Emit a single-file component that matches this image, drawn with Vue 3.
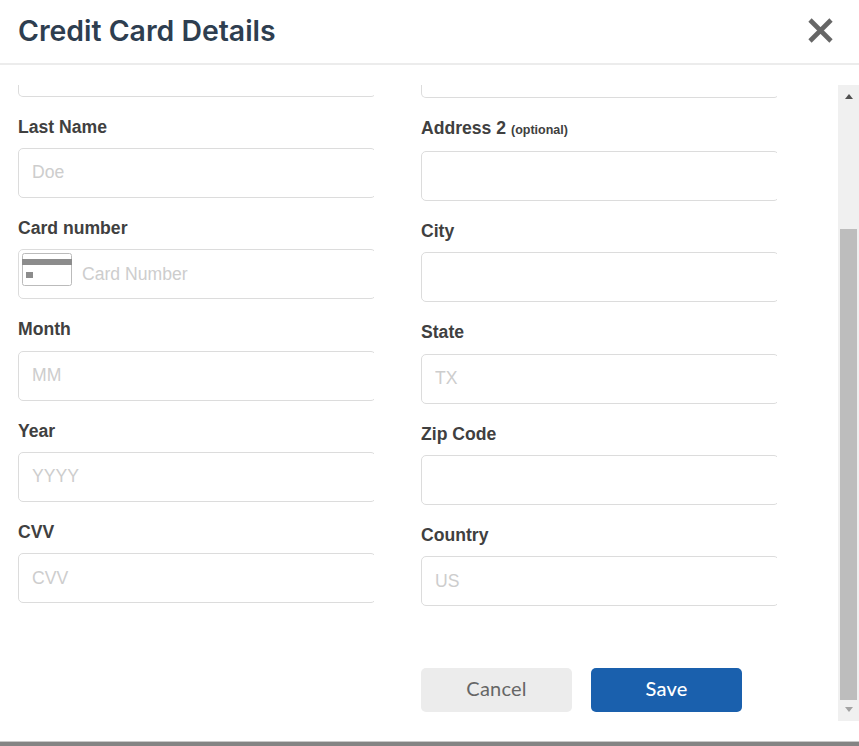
<template>
  <div class="modal">
    <header class="modal-header">
      <h1>Credit Card Details</h1>
      <button class="close" type="button" aria-label="Close">
        <svg width="27" height="27" viewBox="0 0 27 27">
          <path d="M3 3 L24 24 M24 3 L3 24" stroke="#666" stroke-width="4.6" fill="none" />
        </svg>
      </button>
    </header>

    <div class="modal-body">
      <form class="form-grid">
        <div class="column">
          <div class="cut-input"></div>
          <div v-for="f in leftFields" :key="f.label" class="field">
            <label>{{ f.label }}</label>
            <div class="input-wrap">
              <svg v-if="f.card" class="card-icon" width="50" height="33" viewBox="0 0 50 33">
                <rect x="0.5" y="0.5" width="49" height="32" rx="2" fill="#fff" stroke="#bbb" />
                <rect x="0" y="6" width="50" height="6" fill="#8c8c8c" />
                <rect x="4" y="19" width="7" height="6" fill="#8c8c8c" />
              </svg>
              <input :class="{ 'with-card': f.card }" :placeholder="f.placeholder" />
            </div>
          </div>
        </div>

        <div class="column right">
          <div class="cut-input"></div>
          <div v-for="f in rightFields" :key="f.label" class="field">
            <label :class="{ 'has-note': f.optional }">{{ f.label }} <small v-if="f.optional">(optional)</small></label>
            <div class="input-wrap">
              <input :placeholder="f.placeholder" />
            </div>
          </div>
          <div class="actions">
            <button type="button" class="btn cancel">Cancel</button>
            <button type="button" class="btn save">Save</button>
          </div>
        </div>
      </form>

      <div class="scrollbar">
        <div class="arrow up"></div>
        <div class="track">
          <div class="thumb"></div>
        </div>
        <div class="arrow down"></div>
      </div>
    </div>

    <div class="bottom-edge"></div>
  </div>
</template>

<script setup>
const leftFields = [
  { label: 'Last Name', placeholder: 'Doe' },
  { label: 'Card number', placeholder: 'Card Number', card: true },
  { label: 'Month', placeholder: 'MM' },
  { label: 'Year', placeholder: 'YYYY' },
  { label: 'CVV', placeholder: 'CVV' },
];

const rightFields = [
  { label: 'Address 2', placeholder: '', optional: true },
  { label: 'City', placeholder: '' },
  { label: 'State', placeholder: 'TX' },
  { label: 'Zip Code', placeholder: '' },
  { label: 'Country', placeholder: 'US' },
];
</script>

<style>
html, body {
  margin: 0;
  background: #fff;
}
</style>

<style scoped>
.modal {
  width: 859px;
  height: 746px;
  display: flex;
  flex-direction: column;
  overflow: hidden;
  background: #fff;
  font-family: "Liberation Sans", Arial, sans-serif;
}

.modal-header {
  height: 60px;
  flex: none;
  display: flex;
  align-items: center;
  justify-content: space-between;
  padding: 0 25px 3px 18px;
  border-bottom: 2px solid #ececec;
  box-sizing: content-box;
}

h1 {
  margin: 0;
  font-family: Inter, sans-serif;
  font-size: 28.4px;
  font-weight: 600;
  color: #2e3e50;
}

.close {
  border: 0;
  padding: 0;
  background: none;
  display: flex;
}

.modal-body {
  flex: 1;
  min-height: 0;
  display: flex;
  padding-top: 20px;
}

.form-grid {
  flex: 1;
  display: grid;
  grid-template-columns: 356px 356px;
  column-gap: 47px;
  padding-left: 18px;
  align-content: start;
}

.column {
  display: flex;
  flex-direction: column;
  overflow: hidden;
}

.cut-input {
  height: 11.67px;
  border: 1px solid #dcdcdc;
  border-top: 0;
  border-radius: 0 0 5px 5px;
  margin-right: -2px;
  box-sizing: border-box;
}

.column.right .cut-input {
  height: 13px;
  margin-bottom: 1.67px;
}

.field {
  padding-top: 19.93px;
}

label {
  display: block;
  height: 20px;
  line-height: 20px;
  margin-bottom: 11.4px;
  font-size: 17.6px;
  font-weight: 700;
  color: #404040;
}

label.has-note {
  margin-top: -2px;
  margin-bottom: 13.4px;
}

small {
  font-size: 12.5px;
}

.input-wrap {
  position: relative;
}

input {
  display: block;
  width: calc(100% + 2px);
  height: 50px;
  box-sizing: border-box;
  padding: 0 13px;
  border: 1px solid #dcdcdc;
  border-radius: 5px;
  outline: 0;
  font-family: inherit;
  font-size: 17.6px;
  background: transparent;
}

input::placeholder {
  color: #cdcdcd;
  opacity: 1;
}

input.with-card {
  padding-left: 63px;
}

.card-icon {
  position: absolute;
  left: 4px;
  top: 4px;
}

.actions {
  display: flex;
  gap: 19px;
  margin-top: 62px;
}

.btn {
  width: 151px;
  height: 44px;
  border: 0;
  border-radius: 5px;
  padding: 0 0 5px;
  font-family: Lato, sans-serif;
  font-size: 20px;
  letter-spacing: 0.2px;
}

.cancel {
  background: #ececec;
  color: #666;
}

.save {
  background: #1a60ad;
  color: #fff;
  font-weight: 500;
}

.scrollbar {
  width: 21px;
  height: 636px;
  flex: none;
  display: flex;
  flex-direction: column;
  background: #f0f0f0;
}

.arrow {
  height: 21px;
  flex: none;
  box-sizing: border-box;
  display: flex;
  align-items: center;
  justify-content: center;
}

.arrow.up {
  padding-top: 2px;
}

.arrow.down {
  padding-bottom: 3px;
}

.arrow::before {
  content: "";
  border-left: 4.5px solid transparent;
  border-right: 4.5px solid transparent;
}

.arrow.up::before {
  border-bottom: 5px solid #505050;
}

.arrow.down::before {
  border-top: 5px solid #a3a3a3;
}

.track {
  flex: 1;
  display: flex;
  flex-direction: column;
  justify-content: flex-end;
  padding: 0 2px;
}

.thumb {
  height: 471px;
  background: #bdbdbd;
}

.bottom-edge {
  height: 5px;
  flex: none;
  margin-top: auto;
  background: #848484;
  border-top: 1px solid #c8c8c8;
  box-sizing: border-box;
}
</style>
